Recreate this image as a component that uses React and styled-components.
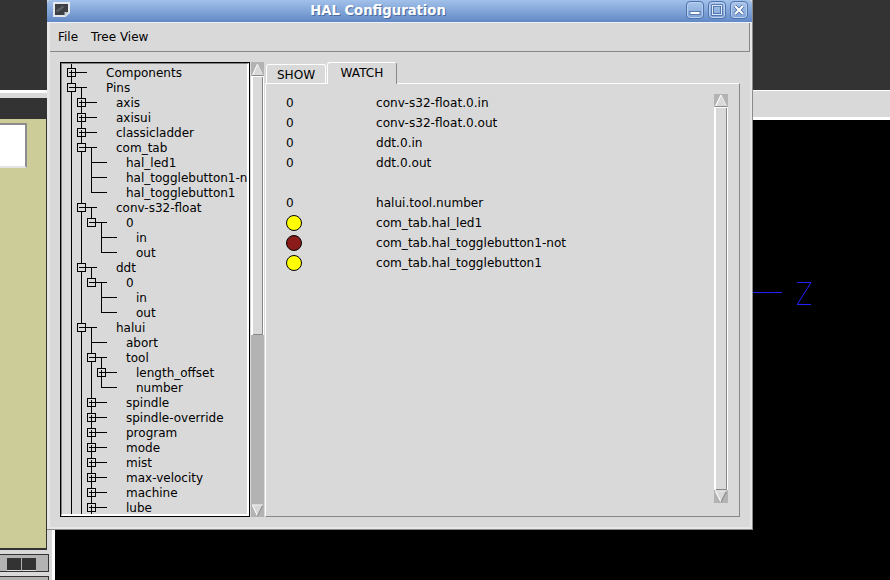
import React from "react";
import styled, { createGlobalStyle } from "styled-components";

const GlobalStyle = createGlobalStyle`
  * {
    box-sizing: border-box;
  }
  html, body {
    margin: 0;
    padding: 0;
    background: #000;
  }
  body {
    font-family: "DejaVu Sans", "Liberation Sans", sans-serif;
    font-size: 12px;
    color: #000;
  }
`;

const Desktop = styled.div`
  position: relative;
  width: 890px;
  height: 580px;
  overflow: hidden;
  display: flex;
  background: #000;
`;

/* the application behind the dialog */
const LeftColumn = styled.div`
  width: 55px;
  height: 580px;
  flex: none;
  display: flex;
  flex-direction: column;
`;

const RightColumn = styled.div`
  flex: 1;
  display: flex;
  flex-direction: column;
`;

const DarkBand = styled.div`
  height: ${(p) => p.$h}px;
  flex: none;
  background: #333;
`;

const GreyBand = styled.div`
  height: ${(p) => p.$h}px;
  flex: none;
  background: #d9d9d9;
  border-top: ${(p) => p.$top}px solid #fff;
  border-bottom: ${(p) => p.$bottom}px solid #fff;
`;

const Canvas = styled.div`
  flex: 1;
  background: #000;
`;

const AxisMark = styled.svg`
  display: block;
`;

const SidePane = styled.div`
  flex: 1;
  background: #d9d9d9;
  border-right: 3px solid #fff;
`;

const Olive = styled.div`
  width: 47px;
  height: 431px;
  background: #cccc99;
  border-right: 1px solid #333;
  border-bottom: 2px solid #333;
  padding-top: 4px;
`;

const WhiteBox = styled.div`
  width: 27px;
  height: 45px;
  background: #fff;
  border-top: 2px solid #8c8c8c;
  border-right: 2px solid #8c8c8c;
  border-bottom: 2px solid #e4e4e4;
`;

const Strip = styled.div`
  width: 49px;
  height: 18px;
  margin-top: 4px;
  background: #b3b3b3;
  border: 1px solid #333;
  border-left: none;
  padding: 3px 0 0 7px;
  display: flex;
  gap: 1px;
  overflow: hidden;
`;

const StripButton = styled.div`
  width: 14px;
  height: 13px;
  background: #333;
  border-bottom: 1px solid #e0e0e0;
`;

/* HAL Configuration dialog */
const Window = styled.div`
  position: absolute;
  left: 47px;
  top: 0;
  width: 706px;
  height: 530px;
  display: flex;
  flex-direction: column;
  background: #d9d9d9;
  border-right: 1px solid #8a8a8a;
  border-bottom: 1px solid #8a8a8a;
`;

const TitleBar = styled.div`
  height: 23px;
  flex: none;
  display: flex;
  align-items: center;
  padding: 0 4px 3px 6px;
  background: linear-gradient(#a2c1ea, #6289c6);
  border-bottom: 1px solid #eef2f8;
  border-top-left-radius: 4px;
  border-top-right-radius: 4px;
`;

const Title = styled.div`
  flex: 1;
  margin-top: 2px;
  text-align: center;
  font-size: 13.2px;
  font-weight: bold;
  color: #fff;
  text-shadow: 1px 1px 0 #4a6a9c;
`;

const TitleButtons = styled.div`
  display: flex;
  gap: 4px;
`;

const TitleButton = styled.div`
  width: 18px;
  height: 18px;
  border: 1px solid #4d72ad;
  border-radius: 4px;
  background: linear-gradient(#a9c5ea, #7fa2d6);
  box-shadow: inset 0 0 0 1px #b9cfee;
  display: flex;
  align-items: center;
  justify-content: center;
`;

const Frame = styled.div`
  flex: 1;
  min-height: 0;
  display: flex;
  flex-direction: column;
  border-left: 3px solid #e6e6e6;
  border-right: 2px solid #e6e6e6;
  border-bottom: 2px solid #e6e6e6;
`;

const MenuBar = styled.div`
  height: 29px;
  flex: none;
  display: flex;
  align-items: center;
  gap: 13px;
  padding: 0 8px;
  border-right: 1px solid #888;
  border-bottom: 1px solid #888;
`;

const MenuItem = styled.span`
  line-height: 15px;
`;

const Main = styled.div`
  flex: 1;
  min-height: 0;
  display: flex;
  gap: 1px;
  padding: 10px;
`;

const TreeFrame = styled.div`
  width: 190px;
  flex: none;
  border: 1px solid #000;
  overflow: hidden;
`;

const TreeList = styled.div`
  position: relative;
  height: 100%;
  padding-top: 1px;
  overflow: hidden;
  border-top: 1px solid #808080;
  border-left: 1px solid #808080;
  border-bottom: 2px solid #fff;
  border-right: 2px solid #fff;
`;

const TreeLines = styled.svg`
  position: absolute;
  left: 0;
  top: 0;
  display: block;
`;

const TreeRow = styled.div`
  height: 15px;
  line-height: 17px;
  white-space: nowrap;
  padding-left: ${(p) => 44 + p.$depth * 10}px;
`;

const ScrollBar = styled.div`
  width: ${(p) => p.$w}px;
  flex: none;
  display: flex;
  flex-direction: column;
  padding-top: ${(p) => p.$pt}px;
  background: ${(p) => p.$trough};
`;

const ArrowCell = styled.svg`
  display: block;
  flex: none;
`;

const Thumb = styled.div`
  flex: ${(p) => (p.$h ? "none" : 1)};
  height: ${(p) => (p.$h ? `${p.$h}px` : "auto")};
  background: #d9d9d9;
  border-left: 2px solid #fff;
  border-top: 1px solid #fff;
  border-right: 1px solid #fff;
  box-shadow: inset -1px -1px 0 #888;
`;

const Trough = styled.div`
  flex: 1;
`;

const Notebook = styled.div`
  flex: 1;
  min-width: 0;
  display: flex;
  flex-direction: column;
  font-size: 12.1px;
`;

const Tabs = styled.div`
  height: 21px;
  flex: none;
  display: flex;
  align-items: flex-end;
  gap: 1px;
  padding-left: 1px;
`;

const Tab = styled.div`
  position: relative;
  width: ${(p) => p.$w}px;
  height: ${(p) => (p.$active ? 22 : 19)}px;
  margin-bottom: ${(p) => (p.$active ? -1 : 0)}px;
  padding-top: 3px;
  text-align: center;
  line-height: 15px;
  background: #d9d9d9;
  border-top: 1px solid #fff;
  border-left: 1px solid #fff;
  border-right: 1px solid ${(p) => (p.$active ? "#888" : "#fff")};
  border-top-left-radius: 3px;
  border-top-right-radius: 3px;
`;

const Panel = styled.div`
  flex: 1;
  min-height: 0;
  display: flex;
  padding: 10px 11px 13px 20px;
  border-top: 1px solid #fff;
  border-left: 1px solid #fff;
  border-right: 1px solid #888;
  border-bottom: 1px solid #888;
`;

const WatchList = styled.div`
  flex: 1;
  margin-top: -1px;
`;

const WatchRow = styled.div`
  height: 20px;
  display: grid;
  grid-template-columns: 90px 1fr;
  align-items: center;
  line-height: 15px;
`;

const Led = styled.span`
  display: block;
  width: 16px;
  height: 16px;
  border-radius: 50%;
  border: 1px solid #000;
  background: ${(p) => (p.$on ? "#ffff00" : "#8b1a1a")};
`;

const treeRows = [
  [0, "Components", "+"],
  [0, "Pins", "-"],
  [1, "axis", "+"],
  [1, "axisui", "+"],
  [1, "classicladder", "+"],
  [1, "com_tab", "-"],
  [2, "hal_led1"],
  [2, "hal_togglebutton1-not"],
  [2, "hal_togglebutton1"],
  [1, "conv-s32-float", "-"],
  [2, "0", "-"],
  [3, "in"],
  [3, "out"],
  [1, "ddt", "-"],
  [2, "0", "-"],
  [3, "in"],
  [3, "out"],
  [1, "halui", "-"],
  [2, "abort"],
  [2, "tool", "-"],
  [3, "length_offset", "+"],
  [3, "number"],
  [2, "spindle", "+"],
  [2, "spindle-override", "+"],
  [2, "program", "+"],
  [2, "mode", "+"],
  [2, "mist", "+"],
  [2, "max-velocity", "+"],
  [2, "machine", "+"],
  [2, "lube", "+"],
];

const watchRows = [
  { value: "0", name: "conv-s32-float.0.in" },
  { value: "0", name: "conv-s32-float.0.out" },
  { value: "0", name: "ddt.0.in" },
  { value: "0", name: "ddt.0.out" },
  {},
  { value: "0", name: "halui.tool.number" },
  { led: true, name: "com_tab.hal_led1" },
  { led: false, name: "com_tab.hal_togglebutton1-not" },
  { led: true, name: "com_tab.hal_togglebutton1" },
];

const rowX = (depth) => 9.5 + depth * 10;
const rowY = (i) => 8.5 + i * 15;

function TreeConnectors() {
  const lines = [];
  const boxes = [];
  treeRows.forEach(([depth, , state], i) => {
    const x = rowX(depth);
    const y = rowY(i);
    let parent = i - 1;
    while (parent >= 0 && treeRows[parent][0] >= depth) parent--;
    const fromY = parent >= 0 ? rowY(parent) : 0;
    lines.push(`M${x} ${fromY}V${y}M${x} ${y}H${x + 15}`);
    if (state) boxes.push({ x, y, state, key: i });
  });
  // branches which carry on below the visible part
  [1, 17, 29].forEach((last, d) => lines.push(`M${rowX(d)} ${rowY(last)}V452`));

  return (
    <TreeLines width="186" height="452" shapeRendering="crispEdges">
      <path d={lines.join("")} stroke="#000" fill="none" />
      {boxes.map((b) => (
        <g key={b.key}>
          <rect x={b.x - 4} y={b.y - 4} width="8" height="8" fill="#d9d9d9" stroke="#000" />
          <path
            d={
              b.state === "+"
                ? `M${b.x - 2.5} ${b.y}H${b.x + 3}M${b.x} ${b.y - 2.5}V${b.y + 3}`
                : `M${b.x - 2.5} ${b.y}H${b.x + 3}`
            }
            stroke="#000"
          />
        </g>
      ))}
    </TreeLines>
  );
}

function ScrollArrow({ down, size = 13 }) {
  const tri = down ? "M1.5 1.5H11.5L6.5 12Z" : "M6.5 1L1.5 12H11.5Z";
  return (
    <ArrowCell width={size} height="13" viewBox="0 0 13 13" preserveAspectRatio="none">
      <rect width="13" height="13" fill="#b3b3b3" />
      <path d={tri} fill="#d9d9d9" />
      {down ? (
        <>
          <path d="M1 1H12" stroke="#fff" fill="none" />
          <path d="M1.5 1.5L6.5 12" stroke="#fff" fill="none" />
          <path d="M11.5 1.5L6.5 12" stroke="#8a8a8a" fill="none" />
        </>
      ) : (
        <>
          <path d="M6.5 1L1.5 12" stroke="#fff" fill="none" />
          <path d="M6.5 1L11.5 12" stroke="#e8e8e8" fill="none" />
          <path d="M1 12.5H12" stroke="#8a8a8a" fill="none" />
        </>
      )}
    </ArrowCell>
  );
}

function WindowIcon() {
  return (
    <svg width="17" height="15" viewBox="0 0 17 15">
      <path d="M1 1H16V10.5L12 14H1Z" fill="#3d3f42" stroke="#e4e8ee" strokeWidth="2" />
      <path d="M3.5 9.5L10.5 4.5" stroke="#5c6166" strokeWidth="2.5" />
      <path d="M11.5 14.5L16.5 10H11.5Z" fill="#c4ccd6" />
    </svg>
  );
}

function MinimizeIcon() {
  return (
    <svg width="12" height="12" viewBox="0 0 12 12">
      <rect x="1" y="7.5" width="10" height="3" fill="#fff" stroke="#3f629c" strokeWidth="0.8" />
    </svg>
  );
}

function MaximizeIcon() {
  return (
    <svg width="12" height="12" viewBox="0 0 12 12">
      <rect x="1.5" y="1.5" width="9" height="9" fill="none" stroke="#3f629c" strokeWidth="2.4" />
      <rect x="1.5" y="1.5" width="9" height="9" fill="none" stroke="#dbe6f6" strokeWidth="1" />
    </svg>
  );
}

function CloseIcon() {
  return (
    <svg width="12" height="12" viewBox="0 0 12 12">
      <path d="M2 2L10 10M10 2L2 10" stroke="#3f629c" strokeWidth="3.6" />
      <path d="M2 2L10 10M10 2L2 10" stroke="#fff" strokeWidth="2.2" />
    </svg>
  );
}

function App() {
  return (
    <Desktop>
      <GlobalStyle />
      <LeftColumn>
        <DarkBand $h={90} />
        <GreyBand $h={8} $top={3} $bottom={0} />
        <DarkBand $h={21} />
        <SidePane>
          <Olive>
            <WhiteBox />
          </Olive>
          <Strip>
            <StripButton />
            <StripButton />
          </Strip>
          <Strip>
            <StripButton />
            <StripButton />
          </Strip>
        </SidePane>
      </LeftColumn>
      <RightColumn>
        <DarkBand $h={90} />
        <GreyBand $h={30} $top={1} $bottom={3} />
        <Canvas>
          <AxisMark width="835" height="200" viewBox="55 120 835 200" shapeRendering="crispEdges">
            <path d="M753 292.5H782" stroke="#2222ff" fill="none" />
            <path d="M797 282.5H811L797.5 304M797 304.5H811" stroke="#2222ff" fill="none" shapeRendering="auto" />
          </AxisMark>
        </Canvas>
      </RightColumn>

      <Window>
        <TitleBar>
          <WindowIcon />
          <Title>HAL Configuration</Title>
          <TitleButtons>
            <TitleButton>
              <MinimizeIcon />
            </TitleButton>
            <TitleButton>
              <MaximizeIcon />
            </TitleButton>
            <TitleButton>
              <CloseIcon />
            </TitleButton>
          </TitleButtons>
        </TitleBar>
        <Frame>
          <MenuBar>
            <MenuItem>File</MenuItem>
            <MenuItem>Tree View</MenuItem>
          </MenuBar>
          <Main>
            <TreeFrame>
              <TreeList>
                {treeRows.map(([depth, name], i) => (
                  <TreeRow key={i} $depth={depth}>
                    {name}
                  </TreeRow>
                ))}
                <TreeConnectors />
              </TreeList>
            </TreeFrame>
            <ScrollBar $w={13} $pt={1} $trough="#b3b3b3">
              <ScrollArrow />
              <Thumb $h={259} />
              <Trough />
              <ScrollArrow down />
            </ScrollBar>
            <Notebook>
              <Tabs>
                <Tab $w={60}>SHOW</Tab>
                <Tab $w={70} $active>
                  WATCH
                </Tab>
              </Tabs>
              <Panel>
                <WatchList>
                  {watchRows.map((row, i) => (
                    <WatchRow key={i}>
                      {row.led === undefined ? <span>{row.value}</span> : <Led $on={row.led} />}
                      <span>{row.name}</span>
                    </WatchRow>
                  ))}
                </WatchList>
                <ScrollBar $w={14} $pt={0} $trough="#d9d9d9">
                  <ScrollArrow size={14} />
                  <Thumb />
                  <ScrollArrow down size={14} />
                </ScrollBar>
              </Panel>
            </Notebook>
          </Main>
        </Frame>
      </Window>
    </Desktop>
  );
}

export default App;
